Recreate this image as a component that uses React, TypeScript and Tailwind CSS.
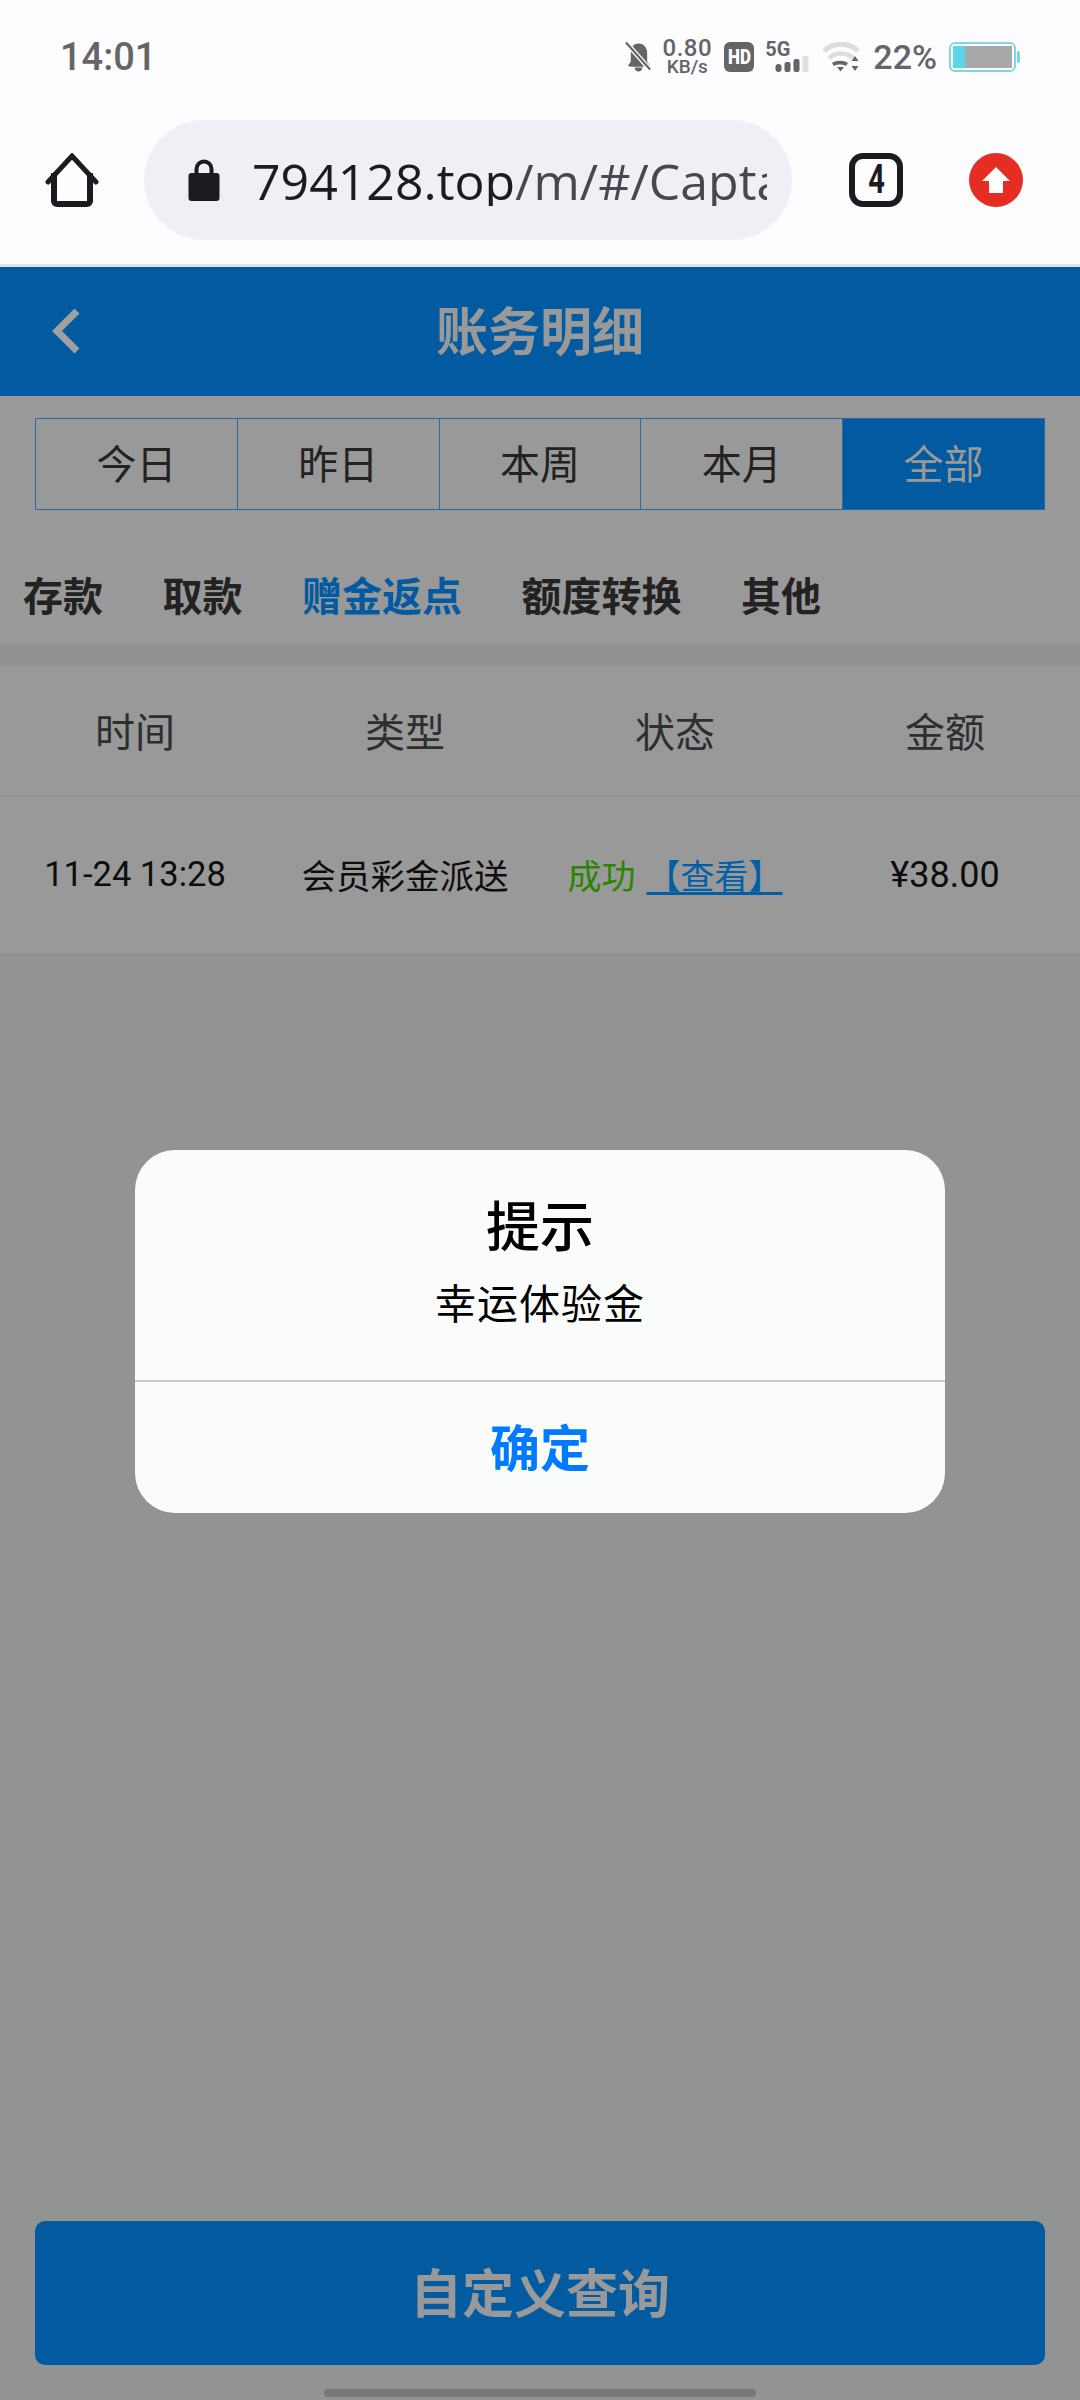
import React from 'react';

const CJK = 'font-["Noto_Sans_CJK_SC","Noto_Sans",sans-serif]';

const ranges = [
  { label: '今日' },
  { label: '昨日' },
  { label: '本周' },
  { label: '本月' },
  { label: '全部', active: true },
];

const categories = [
  { label: '存款' },
  { label: '取款' },
  { label: '赠金返点', active: true },
  { label: '额度转换' },
  { label: '其他' },
];

const columns = ['时间', '类型', '状态', '金额'];

const StatusBar: React.FC = () => (
  <div className="h-[90px] bg-[#fdfcff] flex items-center pl-[60px] pr-[60px] pt-[24px] text-[#666467]">
    <span className='text-[38px] font-medium leading-none font-["Roboto",sans-serif]'>14:01</span>
    <div className="ml-auto flex items-center">
      {/* bell muted */}
      <svg width="27" height="32" viewBox="0 0 28 32" className="mr-[11px]">
        <path d="M14 2c6 0 9 5 9 10v9l3 4-2 1H6l-3-1 3-4V10C7 5 9 2 14 2zM10 27h8c0 3-2 4-4 4s-4-1-4-4z" fill="#666467" />
        <path d="M1 1l25 28" stroke="#fdfcff" strokeWidth="5" />
        <path d="M1 1l25 28" stroke="#666467" strokeWidth="2.2" />
      </svg>
      <div className='w-[48px] flex flex-col items-center font-["Roboto",sans-serif] mr-[13px]'>
        <span className="text-[24px] leading-[20px] font-medium tracking-[0.5px]">0.80</span>
        <span className="text-[19px] leading-[18px] font-medium">KB/s</span>
      </div>
      <div className='w-[30px] h-[30px] bg-[#666467] rounded-[6px] flex items-center justify-center text-white text-[20px] font-black leading-none font-["Roboto",sans-serif] mr-[11px]'>
        <span className="scale-x-[0.85]">HD</span>
      </div>
      <div className="w-[45px] h-[30px] relative mr-[13px]">
        <span className='absolute left-0 -top-[4px] text-[20px] font-bold leading-[22px] font-["Roboto",sans-serif]'>5G</span>
        <svg width="35" height="16" viewBox="0 0 34 16" className="absolute left-[10px] top-[14px]">
          <rect x="0" y="8" width="6" height="8" rx="3" fill="#666467" />
          <rect x="9" y="6" width="6" height="10" rx="2" fill="#666467" />
          <rect x="18" y="3" width="6" height="13" rx="2" fill="#666467" />
          <rect x="27" y="0" width="6" height="16" rx="2" fill="#dfdfdf" />
        </svg>
      </div>
      <svg width="37" height="30" viewBox="0 0 37 30" className="mr-[13px]">
        <path d="M1 9C10 0 26 0 35 9" fill="none" stroke="#dddddd" strokeWidth="5" />
        <path d="M6 16c7-6 17-6 24 0" fill="none" stroke="#dddddd" strokeWidth="4.500" />
        <path d="M9 21c4-3 12-3 16 0l-2 3c-3-2-9-2-12 0z" fill="#666467" />
        <path d="M14 25h7l-3.500 4.500z" fill="#666467" />
        <path d="M32 14l3.500 5h-7zM32 29l3.500-5h-7z" fill="#666467" />
      </svg>
      <span className='text-[34px] font-medium leading-none font-["Roboto",sans-serif] mr-[12px]'>22%</span>
      <div className="flex items-center">
        <div className="w-[67px] h-[30px] border-2 border-[#7fd6e5] rounded-[6px] p-[2px] flex">
          <div className="w-[12px] bg-[#5bd5e8]" />
          <div className="flex-1 bg-[#a9a9a9]" />
        </div>
        <div className="w-[3px] h-[12px] bg-[#7fd6e5] ml-[1px] rounded-r-[2px]" />
      </div>
    </div>
  </div>
);

const BrowserBar: React.FC = () => (
  <div className="h-[177px] bg-[#fdfcff] flex items-start pt-[30px] border-b-[3px] border-[#dfe5f0]">
    <div className="w-[144px] h-[120px] flex items-center pl-[45px]">
      <svg width="54" height="54" viewBox="0 0 54 54">
        <path d="M3 29L27 3l24 26" fill="none" stroke="#1b1b20" strokeWidth="5" strokeLinecap="round" />
        <path d="M9 20v28a3 3 0 0 0 3 3h30a3 3 0 0 0 3-3V20" fill="none" stroke="#1b1b20" strokeWidth="6" />
      </svg>
    </div>
    <div className="w-[648px] h-[120px] bg-[#efeff6] rounded-full flex items-center pl-[44px]">
      <svg width="32" height="42" viewBox="0 0 31 42" className="shrink-0">
        <path d="M8 18V10a7.500 7.500 0 0 1 15 0v8" fill="none" stroke="#1b1b20" strokeWidth="4" />
        <rect x="0" y="14" width="31" height="28" rx="3" fill="#1b1b20" />
      </svg>
      <div className='ml-[32px] pt-[2px] w-[515px] overflow-hidden whitespace-nowrap text-[50px] leading-none font-["Open_Sans","Noto_Sans",sans-serif] text-[#47474f]'>
        <span className="text-[#1b1b20]">794128.top</span>/m/#/Capta
      </div>
    </div>
    <div className="h-[120px] flex items-center pl-[57px]">
      <div className='w-[54px] h-[54px] border-[6px] border-[#1b1b20] rounded-[14px] flex items-center justify-center text-[#1b1b20] text-[40px] font-bold leading-none font-["Roboto",sans-serif]'>
        <span className="scale-x-[0.72]">4</span>
      </div>
      <div className="ml-[66px] w-[54px] h-[54px] bg-[#e52d23] rounded-full flex items-center justify-center">
        <svg width="30" height="28" viewBox="0 0 30 28">
          <path d="M15 1l14 14h-7v12H8V15H1z" fill="#ffffff" />
        </svg>
      </div>
    </div>
  </div>
);

const App: React.FC = () => {
  return (
    <div className={`relative w-[1080px] h-[2400px] overflow-hidden flex flex-col bg-[#929493] ${CJK}`}>
      <StatusBar />
      <BrowserBar />

      {/* header */}
      <div className="h-[129px] shrink-0 bg-[#025ba0] relative flex items-center justify-center pb-[6px]">
        <svg width="28" height="46" viewBox="0 0 28 46" className="absolute left-[52px] top-[41px]">
          <path d="M25 3L5 23l20 20" fill="none" stroke="#a0a0a0" strokeWidth="7" />
        </svg>
        <span className="text-[52px] font-bold text-[#999999] leading-none">账务明细</span>
      </div>

      {/* date range */}
      <div className="bg-[#999999] pt-[22px] px-[35px]">
        <div className="flex h-[92px] border border-[#2a6ba6]">
          {ranges.map((r, i) => (
            <div
              key={r.label}
              className={`flex-1 flex items-center justify-center text-[40px] leading-none pb-[5px] ${
                r.active ? 'bg-[#025ba0] text-[#999999]' : 'text-[#222222]'
              } ${i > 0 ? 'border-l border-[#2a6ba6]' : ''}`}
            >
              {r.label}
            </div>
          ))}
        </div>
      </div>

      {/* categories */}
      <div className="h-[135px] bg-[#999999] flex items-center pl-[23px] pt-[32px] gap-[59.500px]">
        {categories.map((c) => (
          <span
            key={c.label}
            className={`text-[40px] font-bold leading-none ${c.active ? 'text-[#025ba0]' : 'text-[#222222]'}`}
          >
            {c.label}
          </span>
        ))}
      </div>

      <div className="h-[21px] bg-[#919392]" />

      {/* table */}
      <div className="bg-[#999999]">
        <div className="h-[130px] pb-[2px] grid grid-cols-4 items-center text-center text-[40px] text-[#2e2e2e] border-b border-[#8f8f8f]">
          {columns.map((c) => (
            <span key={c}>{c}</span>
          ))}
        </div>
        <div className="h-[158px] grid grid-cols-4 items-center text-center text-[34px] text-[#0d0d0d] border-b border-[#919191]">
          <span className='font-["Roboto","Noto_Sans",sans-serif] text-[34.500px]'>11-24 13:28</span>
          <span className="whitespace-nowrap text-[34.500px]">会员彩金派送</span>
          <span className="whitespace-nowrap">
            <span className="text-[#2a8500]">成功</span>
            <span className="ml-[11px] text-[#025fa6] underline underline-offset-[3px] decoration-[3px]">【查看】</span>
          </span>
          <span className='font-["Roboto","Noto_Sans",sans-serif] text-[36px]'>¥38.00</span>
        </div>
      </div>

      {/* custom query */}
      <div className="mt-auto mx-[35px] mb-[35px] h-[144px] pb-[4px] bg-[#025ba0] rounded-[10px] flex items-center justify-center">
        <span className="text-[52px] font-bold text-[#999999] leading-none">自定义查询</span>
      </div>

      {/* dialog */}
      <div className="absolute top-[1150px] left-[135px] w-[810px] h-[363px] bg-[#fafcfb] rounded-[40px] flex flex-col overflow-hidden">
        <div className="h-[232px] flex flex-col items-center text-black border-b-2 border-[#cccccc]">
          <span className="mt-[47px] text-[54px] font-medium leading-none">提示</span>
          <span className="mt-[30px] text-[41px] leading-none tracking-[1px]">幸运体验金</span>
        </div>
        <div className="flex-1 flex items-center justify-center pb-[5px] text-[50px] font-bold text-[#007aff] leading-none">确定</div>
      </div>

      {/* home indicator */}
      <div className="absolute left-[324px] top-[2389px] w-[432px] h-[8px] rounded-full bg-[#777777]" />
    </div>
  );
};

export default App;
